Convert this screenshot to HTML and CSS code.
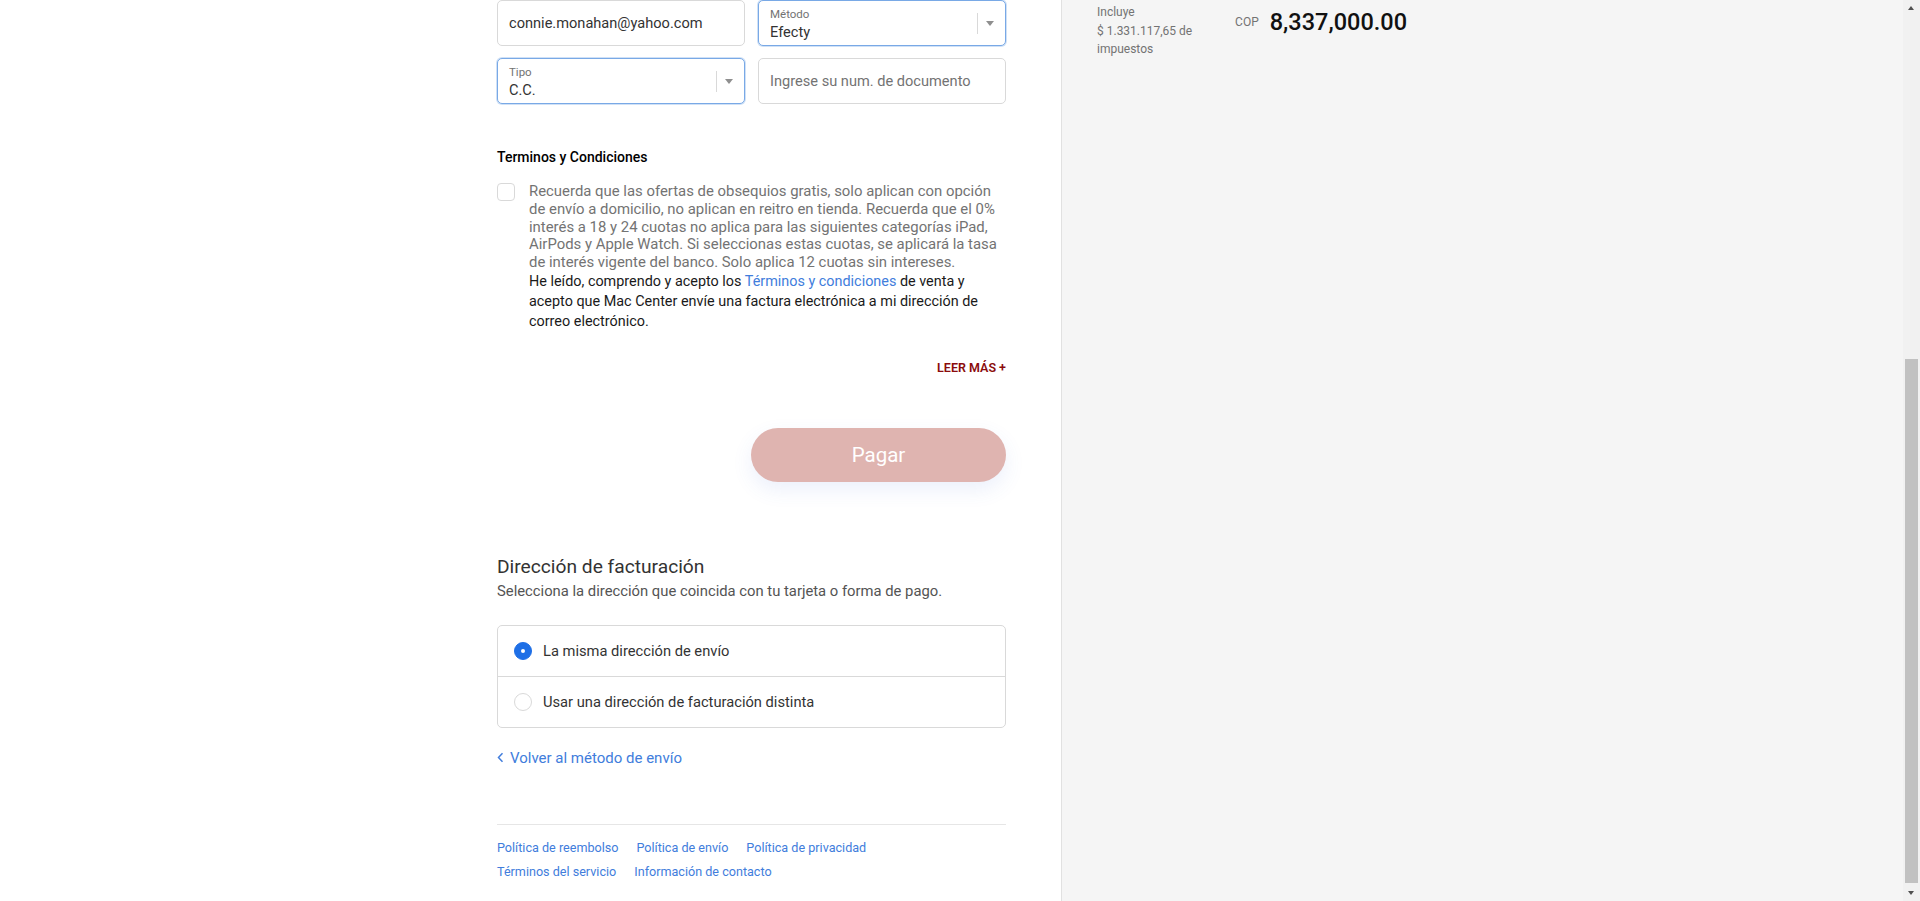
FILE: index.html
```html
<!DOCTYPE html>
<html lang="es">
<head>
<meta charset="utf-8">
<title>Pago - Mac Center</title>
<link rel="stylesheet" href="styles.css">
</head>
<body>
<div class="page">
  <main class="main">
    <div class="main-inner">
      <header class="shop-header">
        <div class="logo">Mac Center</div>
        <nav class="crumbs"><span class="crumb-link">Carrito</span> › <span class="crumb-link">Información</span> › <span class="crumb-link">Envío</span> › <b>Pago</b></nav>
      </header>

      <div class="review">
        <div class="review-row"><span class="review-label">Contacto</span><span class="review-value">connie.monahan@yahoo.com</span></div>
        <div class="review-row"><span class="review-label">Enviar a</span><span class="review-value">Calle 100 # 15-20, Bogotá</span></div>
        <div class="review-row"><span class="review-label">Método</span><span class="review-value">Envío estándar · Gratis</span></div>
      </div>

      <section class="payment">
        <h2 class="section-title">Pago</h2>
        <p class="section-desc">Todas las transacciones son seguras y están encriptadas.</p>
        <div class="gateways">
          <div class="gateway"><span class="radio"></span>Tarjeta de crédito</div>
          <div class="gateway"><span class="radio"></span>PSE</div>
          <div class="gateway"><span class="radio on"></span>Efecty</div>
        </div>
      </section>

      <div class="fields">
        <input class="field" type="email" value="connie.monahan@yahoo.com" aria-label="Correo electrónico">
        <div class="field select focus">
          <span class="select-label">Método</span>
          <span class="select-value">Efecty</span>
          <span class="caret"></span>
        </div>
        <div class="field select focus">
          <span class="select-label">Tipo</span>
          <span class="select-value">C.C.</span>
          <span class="caret"></span>
        </div>
        <input class="field" type="text" placeholder="Ingrese su num. de documento" aria-label="Documento">
      </div>

      <section class="terms">
        <h3 class="terms-title">Terminos y Condiciones</h3>
        <div class="check-row">
          <span class="checkbox"></span>
          <div class="terms-text">
            <p class="terms-note">Recuerda que las ofertas de obsequios gratis, solo aplican con opción<br>de envío a domicilio, no aplican en reitro en tienda. Recuerda que el 0%<br>interés a 18 y 24 cuotas no aplica para las siguientes categorías iPad,<br>AirPods y Apple Watch. Si seleccionas estas cuotas, se aplicará la tasa<br>de interés vigente del banco. Solo aplica 12 cuotas sin intereses.</p>
            <p class="terms-accept">He leído, comprendo y acepto los <a class="link" href="#">Términos y condiciones</a> de venta y<br>acepto que Mac Center envíe una factura electrónica a mi dirección de<br>correo electrónico.</p>
          </div>
        </div>
        <div class="read-more">LEER MÁS +</div>
      </section>

      <div class="pay-row">
        <button class="pay-btn" type="button">Pagar</button>
      </div>

      <section class="billing">
        <h2 class="billing-title">Dirección de facturación</h2>
        <p class="billing-desc">Selecciona la dirección que coincida con tu tarjeta o forma de pago.</p>
        <div class="options">
          <div class="option"><span class="radio on"></span>La misma dirección de envío</div>
          <div class="option"><span class="radio"></span>Usar una dirección de facturación distinta</div>
        </div>
      </section>

      <a class="back link" href="#"><svg class="chev" width="7" height="11" viewBox="0 0 7 11"><path d="M5.5 1.2 L1.5 5.5 L5.5 9.8" fill="none" stroke="currentColor" stroke-width="1.5"/></svg>Volver al método de envío</a>

      <footer class="footer">
        <ul class="footer-links">
          <li><a class="link" href="#">Política de reembolso</a></li>
          <li><a class="link" href="#">Política de envío</a></li>
          <li><a class="link" href="#">Política de privacidad</a></li>
          <li class="break"></li>
          <li><a class="link" href="#">Términos del servicio</a></li>
          <li><a class="link" href="#">Información de contacto</a></li>
        </ul>
      </footer>
    </div>
  </main>

  <aside class="sidebar">
    <div class="sidebar-inner">
      <div class="products">
        <div class="product"><span class="thumb"></span><span class="product-name">MacBook Air 13"</span><span class="product-price">$ 5.499.000</span></div>
        <div class="product"><span class="thumb"></span><span class="product-name">AirPods Pro</span><span class="product-price">$ 1.299.000</span></div>
        <div class="product"><span class="thumb"></span><span class="product-name">Apple Watch SE</span><span class="product-price">$ 1.539.000</span></div>
      </div>
      <div class="discount">
        <input class="discount-input" type="text" placeholder="Código de descuento">
        <button class="discount-btn" type="button">Usar</button>
      </div>
      <div class="lines">
        <div class="line"><span>Subtotal</span><span>$ 8.337.000</span></div>
        <div class="line"><span>Envío</span><span>Gratis</span></div>
        <div class="line"><span>Descuento</span><span>$ 0</span></div>
      </div>
      <div class="total-block">
        <div class="total-label">Total</div>
        <div class="total-row">
          <div class="tax-note">Incluye <span class="nowrap">$ 1.331.117,65 de</span> impuestos</div>
          <div class="total-price"><span class="currency">COP</span><span class="amount">8,337,000.00</span></div>
        </div>
      </div>
    </div>
  </aside>
</div>

<div class="scrollbar" aria-hidden="true">
  <span class="sb-btn sb-up"></span>
  <span class="sb-track"><span class="sb-thumb"></span></span>
  <span class="sb-btn sb-down"></span>
</div>
<script src="script.js"></script>
</body>
</html>
```

FILE: styles.css
```css
html, body {
  margin: 0;
  padding: 0;
}
body {
  font-family: Roboto, "Liberation Sans", Arial, sans-serif;
  color: #333333;
  background: #ffffff;
}

/* window scrollbar drawn over the right edge */
.scrollbar {
  position: fixed;
  top: 0;
  right: 0;
  width: 17px;
  height: 100vh;
  background: #f1f1f1;
  display: flex;
  flex-direction: column;
  z-index: 10;
}
.sb-btn {
  flex: 0 0 17px;
  position: relative;
}
.sb-btn::after {
  content: "";
  position: absolute;
  left: 5px;
  border-left: 3.5px solid transparent;
  border-right: 3.5px solid transparent;
}
.sb-up::after {
  top: 6px;
  border-bottom: 4px solid #505050;
}
.sb-down::after {
  top: 7px;
  border-top: 4px solid #505050;
}
.sb-track {
  flex: 1;
  padding-top: 342px;
}
.sb-thumb {
  display: block;
  height: 524px;
  margin: 0 2px;
  background: #c1c1c1;
}

.page {
  display: flex;
  min-height: 100vh;
}
.main {
  flex: 0 0 1061px;
  box-sizing: border-box;
  display: flex;
  justify-content: flex-end;
  padding-right: 55px;
}
.main-inner {
  width: 509px;
  padding-top: 56px;
}
.link {
  color: #417ddc;
  text-decoration: none;
}

/* upper part (scrolled out of view) */
.logo {
  font-size: 26px;
  line-height: 32px;
  margin-bottom: 16px;
  color: #333;
}
.crumbs {
  font-size: 13px;
  line-height: 18px;
  margin-bottom: 40px;
  color: #737373;
}
.crumb-link { color: #417ddc; }
.review {
  border: 1px solid #d9d9d9;
  border-radius: 5px;
  margin-bottom: 44px;
}
.review-row {
  height: 44px;
  display: flex;
  align-items: center;
  padding: 0 16px;
  gap: 16px;
  font-size: 14px;
}
.review-row + .review-row { border-top: 1px solid #d9d9d9; }
.review-label { color: #737373; width: 80px; }
.section-title {
  font-size: 19px;
  font-weight: 400;
  line-height: 24px;
  margin: 0 0 4px;
}
.section-desc {
  font-size: 14px;
  line-height: 20px;
  margin: 0 0 20px;
  color: #737373;
}
.gateways {
  border: 1px solid #d9d9d9;
  border-radius: 5px;
  margin-bottom: 26px;
}
.gateway {
  height: 50px;
  display: flex;
  align-items: center;
  gap: 11px;
  padding-left: 16px;
  font-size: 14px;
}
.gateway + .gateway { border-top: 1px solid #d9d9d9; }

/* fields */
.fields {
  display: grid;
  grid-template-columns: 1fr 1fr;
  column-gap: 13px;
  row-gap: 12px;
}
.field {
  height: 46px;
  box-sizing: border-box;
  border: 1px solid #d9d9d9;
  border-radius: 5px;
  padding: 0 11px;
  font: inherit;
  font-size: 14.6px;
  color: #333;
  background: #fff;
  outline: none;
  width: 100%;
  margin: 0;
}
.field::placeholder { color: #737373; opacity: 1; }
.select {
  position: relative;
  display: flex;
  flex-direction: column;
  align-items: flex-start;
  justify-content: flex-start;
  padding-top: 6px;
  padding-right: 40px;
}
.focus {
  border-color: #79a9e6;
  box-shadow: 0 0 0 1px rgba(121, 169, 230, 0.35);
}
.select-label {
  font-size: 11.5px;
  line-height: 15px;
  color: #737373;
}
.select-value {
  font-size: 14.6px;
  line-height: 18px;
  margin-top: 1px;
  color: #333;
}
.caret {
  position: absolute;
  right: 0;
  top: 12px;
  width: 28px;
  height: 21px;
  border-left: 1px solid #d9d9d9;
  box-sizing: border-box;
}
.caret::after {
  content: "";
  position: absolute;
  left: 8px;
  top: 8px;
  border-left: 4.5px solid transparent;
  border-right: 4.5px solid transparent;
  border-top: 5px solid #8f8f8f;
}

/* terms */
.terms { margin-top: 44px; }
.terms-title {
  font-size: 14px;
  font-weight: 500;
  line-height: 18px;
  margin: 0 0 17px;
  color: #000;
}
.check-row {
  display: flex;
  gap: 14px;
}
.checkbox {
  flex: 0 0 18px;
  height: 18px;
  box-sizing: border-box;
  border: 1px solid #d9d9d9;
  border-radius: 4px;
  background: #fff;
}
.terms-text { flex: 1; }
.terms-note {
  margin: 0;
  font-size: 14.9px;
  line-height: 17.8px;
  color: #737373;
  white-space: nowrap;
}
.terms-accept {
  margin: 0;
  font-size: 14.4px;
  line-height: 20px;
  color: #1a1a1a;
  white-space: nowrap;
}
.read-more {
  margin-top: 28px;
  text-align: right;
  font-size: 12.5px;
  line-height: 16px;
  font-weight: 600;
  color: #8a0c0c;
}
.pay-row {
  display: flex;
  justify-content: flex-end;
  margin-top: 52px;
}
.pay-btn {
  width: 255px;
  height: 54px;
  border: none;
  border-radius: 27px;
  background: #dfb4b0;
  color: #ffffff;
  font-family: inherit;
  font-size: 20.5px;
  box-shadow: 0 8px 20px rgba(70, 110, 220, 0.10);
  padding: 0;
}

/* billing */
.billing { margin-top: 73px; }
.billing-title {
  font-size: 19.2px;
  font-weight: 400;
  line-height: 24px;
  margin: 0 0 2px;
  color: #333;
}
.billing-desc {
  font-size: 14.8px;
  line-height: 20px;
  margin: 0 0 24px;
  color: #545454;
}
.options {
  border: 1px solid #d9d9d9;
  border-radius: 5px;
}
.option {
  height: 50px;
  display: flex;
  align-items: center;
  gap: 11px;
  padding-left: 16px;
  font-size: 14.7px;
  color: #333;
}
.option + .option { border-top: 1px solid #d9d9d9; }
.radio {
  width: 18px;
  height: 18px;
  flex: 0 0 18px;
  box-sizing: border-box;
  border-radius: 50%;
  border: 1px solid #d9d9d9;
  background: #fff;
  position: relative;
}
.radio.on {
  background: #1e6fe6;
  border-color: #1e6fe6;
}
.radio.on::after {
  content: "";
  position: absolute;
  left: 50%;
  top: 50%;
  width: 4px;
  height: 4px;
  margin: -2px 0 0 -2px;
  border-radius: 50%;
  background: #fff;
}
.back {
  margin-top: 20px;
  display: flex;
  align-items: center;
  gap: 6px;
  font-size: 15px;
  line-height: 20px;
}
.chev { flex: 0 0 7px; }

/* footer */
.footer {
  margin-top: 56px;
  border-top: 1px solid #e6e6e6;
  padding: 14px 0 20px;
}
.footer-links {
  list-style: none;
  margin: 0;
  padding: 0;
  display: flex;
  flex-wrap: wrap;
  gap: 3px 18px;
  font-size: 12.6px;
  line-height: 18px;
}
.footer-links .break {
  flex-basis: 100%;
  height: 0;
}

/* sidebar */
.sidebar {
  flex: 1;
  background: #f5f5f5;
  border-left: 1px solid #e1e1e1;
  padding-left: 35px;
}
.sidebar-inner {
  width: 310px;
  padding-top: 57px;
}
.products {
  display: flex;
  flex-direction: column;
  gap: 16px;
  padding-bottom: 24px;
  border-bottom: 1px solid #e1e1e1;
}
.product {
  height: 64px;
  display: flex;
  align-items: center;
  gap: 14px;
  font-size: 14px;
}
.thumb {
  width: 64px;
  height: 64px;
  box-sizing: border-box;
  border: 1px solid #dddddd;
  border-radius: 8px;
  background: #fff;
}
.product-name { flex: 1; }
.discount {
  display: flex;
  gap: 10px;
  padding: 24px 0;
  border-bottom: 1px solid #e1e1e1;
}
.discount-input {
  flex: 1;
  min-width: 0;
  height: 46px;
  box-sizing: border-box;
  border: 1px solid #d9d9d9;
  border-radius: 5px;
  padding: 0 11px;
  font: inherit;
  font-size: 14px;
}
.discount-btn {
  height: 46px;
  border: none;
  border-radius: 5px;
  background: #c8c8c8;
  color: #fff;
  font: inherit;
  font-size: 14px;
  padding: 0 18px;
}
.lines {
  display: flex;
  flex-direction: column;
  gap: 12px;
  padding: 24px 0;
  border-bottom: 1px solid #e1e1e1;
  font-size: 14px;
  line-height: 20px;
}
.line {
  display: flex;
  justify-content: space-between;
}
.total-block { padding-top: 24px; }
.total-label {
  font-size: 16px;
  line-height: 24px;
  margin-bottom: 11px;
}
.total-row {
  display: flex;
  justify-content: space-between;
  align-items: flex-start;
}
.tax-note {
  width: 105px;
  font-size: 12px;
  line-height: 18.5px;
  color: #737373;
}
.nowrap { white-space: nowrap; }
.total-price {
  display: flex;
  align-items: center;
  gap: 11px;
  margin-top: 4px;
}
.currency {
  font-size: 12px;
  color: #737373;
}
.amount {
  font-size: 23.5px;
  line-height: 30px;
  font-weight: 500;
  color: #111;
}
```

FILE: script.js
```js
function scrollToEnd() {
  window.scrollTo(0, document.documentElement.scrollHeight);
}
scrollToEnd();
window.addEventListener('load', scrollToEnd);
```
